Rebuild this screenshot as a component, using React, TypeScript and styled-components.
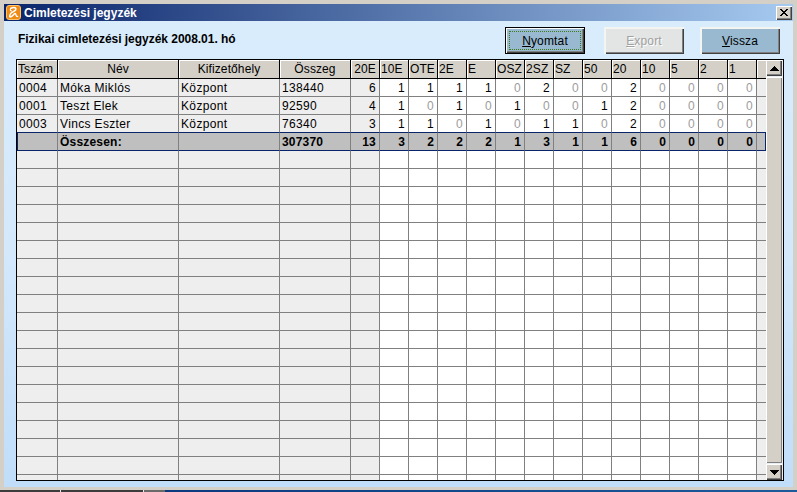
import React from "react";
import styled, { createGlobalStyle } from "styled-components";

const Global = createGlobalStyle`
  html, body { margin: 0; padding: 0; width: 797px; height: 492px; overflow: hidden; background: #d4d0c8; }
  * { box-sizing: border-box; }
  body { font-family: "Liberation Sans", Arial, sans-serif; font-size: 12px; color: #000; }
`;

const Page = styled.div`
  width: 797px;
  height: 492px;
  display: flex;
  flex-direction: column;
`;
const Win = styled.div`
  flex: 1;
  display: flex;
  flex-direction: column;
  padding: 4px 4px 3px 4px;
  background: #d4d0c8;
  min-height: 0;
`;
const TitleBar = styled.div`
  height: 17px;
  flex: none;
  display: flex;
  align-items: center;
  padding: 0 1px 0 2px;
  gap: 3px;
  background: linear-gradient(90deg, #0a246a 0%, #a6caf0 100%);
  color: #fff;
`;
const TitleText = styled.span`
  flex: 1;
  font-weight: bold;
  font-size: 12px;
`;
const CloseBtn = styled.div`
  width: 16px;
  height: 14px;
  background: #d4d0c8;
  box-shadow: inset 1px 1px 0 #fff, inset -1px -1px 0 #404040, inset -2px -2px 0 #808080;
  display: flex;
  align-items: center;
  justify-content: center;
`;
const Client = styled.div`
  flex: 1;
  min-height: 0;
  display: flex;
  flex-direction: column;
  padding: 6px 10px 7px 12px;
  background: linear-gradient(180deg, #d8ecfc 0%, #d3e8fb 50%, #c0ddf9 100%);
`;
const Toolbar = styled.div`
  height: 32px;
  flex: none;
  display: flex;
  align-items: flex-start;
  padding-right: 3px;
`;
const Heading = styled.h1`
  margin: 5px 0 0 2px;
  flex: 1;
  font-size: 12px;
  font-weight: bold;
  letter-spacing: -0.03px;
  line-height: 15px;
`;
const Btn = styled.div<{ $variant: "focus" | "off" | "plain"; $gap: number }>`
  width: 80px;
  height: 27px;
  margin-left: ${(p) => p.$gap}px;
  display: flex;
  align-items: center;
  justify-content: center;
  font-size: 12px;
  letter-spacing: 0.15px;
  position: relative;
  background: ${(p) => (p.$variant === "off" ? "#e2e5e4" : "#98b9d0")};
  color: ${(p) => (p.$variant === "off" ? "#a0a0a0" : "#000")};
  text-shadow: ${(p) => (p.$variant === "off" ? "1px 1px 0 #fff" : "none")};
  box-shadow: ${(p) =>
    p.$variant === "focus"
      ? "inset 0 0 0 1px #000, inset 2px 2px 0 #fff, inset -2px -2px 0 #404040, inset -3px -3px 0 #808080"
      : "inset 2px 2px 0 #f4f4f0, inset -1px -1px 0 #404040, inset -2px -2px 0 #808080"};
  u { text-underline-offset: 1px; }
`;
const FocusRing = styled.span`
  position: absolute;
  inset: 4px;
  border: 1px dotted #3d7a1a;
`;
const Grid = styled.div`
  width: 768px;
  height: 422px;
  flex: none;
  border: 1px solid #000;
  display: flex;
  background: #eee;
`;
const TableWrap = styled.div`
  width: 749px;
  height: 420px;
  overflow: hidden;
`;
const Table = styled.table`
  width: 749px;
  table-layout: fixed;
  border-collapse: separate;
  border-spacing: 0;
`;
const Head = styled.th<{ $align: string }>`
  height: 19px;
  padding: 0 1px;
  font-weight: normal;
  font-size: 12px;
  letter-spacing: 0.1px;
  text-align: ${(p) => p.$align};
  background: #d4d0c8;
  border-right: 1px solid #000;
  border-bottom: 1px solid #000;
  box-shadow: inset 1px 1px 0 #fff;
  white-space: nowrap;
  overflow: hidden;
`;
const EndHead = styled(Head)`
  border-right: 0;
`;
const Cell = styled.td<{ $bg: "grey" | "white"; $num?: boolean; $dim?: boolean; $line?: string }>`
  height: 18px;
  padding: ${(p) => (p.$num ? "0 3px 0 0" : "0 2px")};
  font-size: 12px;
  letter-spacing: 0.35px;
  line-height: 14px;
  text-align: ${(p) => (p.$num ? "right" : "left")};
  white-space: nowrap;
  overflow: hidden;
  color: ${(p) => (p.$dim ? "#9c9c9c" : "#000")};
  background: ${(p) => (p.$bg === "grey" ? "#eeeeee" : "#fff")};
  border-right: 1px solid #808080;
  border-bottom: 1px solid ${(p) => p.$line ?? "#808080"};
`;
const EndCell = styled(Cell)`
  border-right: 0;
`;
const TotalCell = styled.td<{ $num?: boolean; $first?: boolean }>`
  height: 18px;
  padding: ${(p) => (p.$num ? "0 3px 0 0" : "0 2px")};
  font-size: 12px;
  font-weight: bold;
  letter-spacing: 0.2px;
  text-align: ${(p) => (p.$num ? "right" : "left")};
  white-space: nowrap;
  background: #bfbfbf;
  border-right: 1px solid #808080;
  border-bottom: 1px solid #0a246a;
  box-shadow: ${(p) => (p.$first ? "inset 1px 0 0 #0a246a" : "none")};
`;
const TotalEnd = styled.td`
  background: #bfbfbf;
  border-right: 1px solid #0a246a;
  border-bottom: 1px solid #0a246a;
`;
const Scroll = styled.div`
  width: 17px;
  margin-left: 0;
  height: 420px;
  padding-right: 1px;
  background: #e8eef2;
  display: flex;
  flex-direction: column;
`;
const ScrollBtn = styled.div`
  height: 16px;
  flex: none;
  background: #d4d0c8;
  box-shadow: inset 1px 1px 0 #fff, inset -1px -1px 0 #404040, inset -2px -2px 0 #808080;
  display: flex;
  align-items: center;
  justify-content: center;
`;
const Thumb = styled.div`
  flex: 1;
  margin: 1px 0;
  background: #d4d0c8;
  box-shadow: inset 1px 1px 0 #fff, inset -1px -1px 0 #808080;
`;
const Taskbar = styled.div`
  height: 2px;
  flex: none;
  display: flex;
  background: #3c3c3c;
`;
const TaskGap = styled.div<{ $w: number; $bg: string }>`
  width: ${(p) => p.$w}px;
  background: ${(p) => p.$bg};
`;
const TaskFill = styled.div`
  flex: 1;
  background: linear-gradient(90deg, #0a3a80 0%, #1c5a9c 100%);
`;

const heads: [string, string][] = [
  ["Tszám", "left"], ["Név", "center"], ["Kifizetőhely", "center"], ["Összeg", "center"], ["20E", "center"],
  ["10E", "left"], ["OTE", "left"], ["2E", "left"], ["E", "left"], ["OSZ", "left"], ["2SZ", "left"], ["SZ", "left"],
  ["50", "left"], ["20", "left"], ["10", "left"], ["5", "left"], ["2", "left"], ["1", "left"],
];
const widths = [41, 121, 101, 71, 29, ...Array(13).fill(29), 9];

const rows = [
  { id: "0004", name: "Móka Miklós", sum: "138440", e: 6, v: [1, 1, 1, 1, 0, 2, 0, 0, 2, 0, 0, 0, 0] },
  { id: "0001", name: "Teszt Elek", sum: "92590", e: 4, v: [1, 0, 1, 0, 1, 0, 0, 1, 2, 0, 0, 0, 0] },
  { id: "0003", name: "Vincs Eszter", sum: "76340", e: 3, v: [1, 1, 0, 1, 0, 1, 1, 0, 2, 0, 0, 0, 0] },
];
const totals = [3, 2, 2, 2, 1, 3, 1, 1, 6, 0, 0, 0, 0];
const NAVY = "#0a246a";

function AppIcon() {
  return (
    <svg width="15" height="15" viewBox="0 0 15 15">
      <rect x="0.5" y="0.5" width="14" height="14" rx="2.5" fill="#f08a12" stroke="#ffc46a" />
      <path d="M5 3.2 C8 1.8 11 2.6 9.5 5 C8.4 6.8 5.6 7 4.6 8.6 C3.4 10.6 3.2 12.4 5 11.8 C7 11 8 8.6 9 8.6 C10.4 8.6 9.4 11.6 11.6 11.6" fill="none" stroke="#fff" strokeWidth="1.5" strokeLinecap="round" />
      <path d="M5 3.2 C4 4.2 4 5.6 5.6 6" fill="none" stroke="#fff" strokeWidth="1.2" strokeLinecap="round" />
    </svg>
  );
}

function CloseX() {
  return (
    <svg width="8" height="7" viewBox="0 0 8 7" shapeRendering="crispEdges">
      <path d="M0 0h2v1h1v1h2V1h1V0h2v1H7v1H6v1H5v1h1v1h1v1h1v1H6V6H5V5H3v1H2v1H0V6h1V5h1V4h1V3H2V2H1V1H0z" fill="#000" />
    </svg>
  );
}

function Arrow({ down }: { down?: boolean }) {
  return (
    <svg width="9" height="5" viewBox="0 0 9 5" shapeRendering="crispEdges">
      <path d={down ? "M0 0h9v1H8v1H7v1H6v1H5v1H4V4H3V3H2V2H1V1H0z" : "M4 0h1v1h1v1h1v1h1v1h1v1H0V4h1V3h1V2h1V1h1z"} fill="#000" />
    </svg>
  );
}

export default function App() {
  return (
    <Page>
      <Global />
      <Win>
        <TitleBar>
          <AppIcon />
          <TitleText>Cimletezési jegyzék</TitleText>
          <CloseBtn><CloseX /></CloseBtn>
        </TitleBar>
        <Client>
          <Toolbar>
            <Heading>Fizikai cimletezési jegyzék 2008.01. hó</Heading>
            <Btn $variant="focus" $gap={0}><FocusRing /><span><u>N</u>yomtat</span></Btn>
            <Btn $variant="off" $gap={19}><span><u>E</u>xport</span></Btn>
            <Btn $variant="plain" $gap={16}><span><u>V</u>issza</span></Btn>
          </Toolbar>
          <Grid>
            <TableWrap>
              <Table>
                <colgroup>
                  {widths.map((w, i) => <col key={i} width={w} />)}
                </colgroup>
                <thead>
                  <tr>
                    {heads.map(([t, a]) => <Head key={t + a} $align={a}>{t}</Head>)}
                    <EndHead $align="left" />
                  </tr>
                </thead>
                <tbody>
                  {rows.map((r, ri) => {
                    const line = ri === rows.length - 1 ? NAVY : undefined;
                    return (
                      <tr key={r.id}>
                        <Cell $bg="grey" $line={line}>{r.id}</Cell>
                        <Cell $bg="grey" $line={line}>{r.name}</Cell>
                        <Cell $bg="grey" $line={line}>Központ</Cell>
                        <Cell $bg="grey" $line={line}>{r.sum}</Cell>
                        <Cell $bg="grey" $num $line={line}>{r.e}</Cell>
                        {r.v.map((v, i) => (
                          <Cell key={i} $bg="white" $num $dim={v === 0} $line={line}>{v}</Cell>
                        ))}
                        <EndCell $bg="grey" $line={line} />
                      </tr>
                    );
                  })}
                  <tr>
                    <TotalCell $first />
                    <TotalCell>Összesen:</TotalCell>
                    <TotalCell />
                    <TotalCell>307370</TotalCell>
                    <TotalCell $num>13</TotalCell>
                    {totals.map((v, i) => <TotalCell key={i} $num>{v}</TotalCell>)}
                    <TotalEnd />
                  </tr>
                  {Array.from({ length: 19 }, (_, ri) => (
                    <tr key={ri}>
                      {widths.slice(0, 5).map((_w, i) => <Cell key={i} $bg="grey" />)}
                      {totals.map((_v, i) => <Cell key={i} $bg="white" />)}
                      <EndCell $bg="grey" />
                    </tr>
                  ))}
                </tbody>
              </Table>
            </TableWrap>
            <Scroll>
              <ScrollBtn><Arrow /></ScrollBtn>
              <Thumb />
              <ScrollBtn><Arrow down /></ScrollBtn>
            </Scroll>
          </Grid>
        </Client>
      </Win>
      <Taskbar>
        <TaskGap $w={60} $bg="#3c3c3c" />
        <TaskGap $w={1} $bg="#e8e8e8" />
        <TaskGap $w={82} $bg="#3c3c3c" />
        <TaskGap $w={1} $bg="#e8e8e8" />
        <TaskGap $w={21} $bg="#6a6a6a" />
        <TaskFill />
      </Taskbar>
    </Page>
  );
}
